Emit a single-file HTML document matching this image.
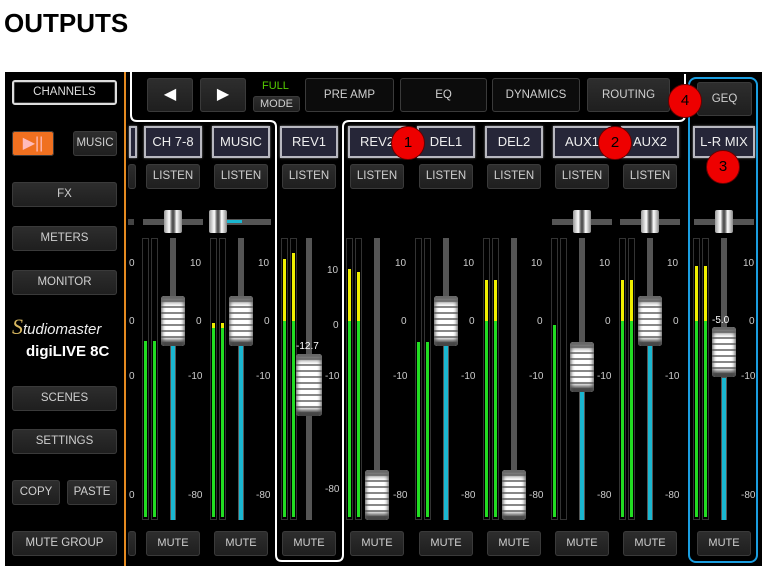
<!DOCTYPE html>
<html><head><meta charset="utf-8"><style>
*{margin:0;padding:0;box-sizing:border-box}
body{width:776px;height:578px;background:#fff;position:relative;overflow:hidden;font-family:"Liberation Sans",Arial,sans-serif}
.a{position:absolute}
h1{position:absolute;left:4px;top:8px;font-size:26px;font-weight:bold;color:#000;letter-spacing:0}
#p{position:absolute;left:5px;top:72px;width:757px;height:494px;background:#000}
.b{position:absolute;background:linear-gradient(#2e2e2e,#1e1e1e);border-radius:3px;color:#cfcfcf;font-size:11.5px;text-align:center;box-shadow:1px 2px 2px #000,inset 0 0 0 1px #3a3a3a}
.lb{position:absolute;top:126px;background:#262638;border:2px solid #b8b8c0;color:#eee;font-size:13px;text-align:center;line-height:28px;height:32px;width:58px;box-shadow:0 0 2px #888}
.m{position:absolute;top:238px;width:7px;height:282px;border:1px solid #333;background:#000}
.m i{position:absolute;left:1px;right:1px;bottom:2px;display:block}
.tr{position:absolute;top:238px;width:6px;height:282px;background:#555}
.cy{position:absolute;width:4px;background:#1ab6d0}
.k{position:absolute;width:24px;height:50px;border-radius:3px;background:repeating-linear-gradient(#fff 0 4px,#888 4px 6px);box-shadow:inset 0 6px 4px #666,inset 0 -6px 4px #444}
.s{position:absolute;color:#ccc;font-size:10px}
.pt{position:absolute;top:219px;width:60px;height:6px;background:#555}
.pk{position:absolute;top:210px;width:18px;height:23px;border-radius:2px;background:linear-gradient(90deg,#999,#fff 30%,#555 45%,#555 55%,#fff 70%,#888)}
.c{position:absolute;width:34px;height:34px;border-radius:50%;background:#e00;border:1px solid #600;color:#000;font-size:15px;text-align:center;line-height:32px}
.L{top:164px;width:54px;height:25px;line-height:25px}.M{top:531px;width:54px;height:25px;line-height:25px;font-size:11px}
</style></head><body>
<h1>OUTPUTS</h1>
<div id="p"></div>
<div class="a" style="left:124px;top:72px;width:2px;height:494px;background:#e58a20"></div>
<svg class="a" style="left:0;top:0" width="776" height="578"><path d="M131,72 V115 Q131,121 137,121 H270 Q276,121 276,127 V555 Q276,561 282,561 H337 Q343,561 343,555 V127 Q343,121 349,121 H679 Q685,121 685,115 V74" fill="none" stroke="#fff" stroke-width="2"/>
<rect x="689" y="78" width="68" height="484" rx="7" fill="none" stroke="#1a9ee0" stroke-width="2"/></svg>
<div class="b" style="left:12px;top:80px;width:105px;height:25px;background:#000;border:2px solid #ddd;line-height:21px;color:#ddd">CHANNELS</div>
<div class="b" style="left:12px;top:131px;width:42px;height:25px;background:#f07020;color:#fbb;line-height:25px;font-size:16px">▶||</div>
<div class="b" style="left:73px;top:131px;width:44px;height:25px;line-height:25px">MUSIC</div>
<div class="b" style="left:12px;top:182px;width:105px;height:25px;line-height:25px">FX</div>
<div class="b" style="left:12px;top:226px;width:105px;height:25px;line-height:25px">METERS</div>
<div class="b" style="left:12px;top:270px;width:105px;height:25px;line-height:25px">MONITOR</div>
<div class="a" style="left:12px;top:314px;color:#eee;font-size:15px;font-style:italic"><span style="color:#d8b860;font-size:22px;font-family:'Liberation Serif',serif">S</span>tudiomaster</div>
<div class="a" style="left:26px;top:343px;color:#fff;font-size:15px;font-weight:bold">digiLIVE 8C</div>
<div class="b" style="left:12px;top:386px;width:105px;height:25px;line-height:25px">SCENES</div>
<div class="b" style="left:12px;top:429px;width:105px;height:25px;line-height:25px">SETTINGS</div>
<div class="b" style="left:12px;top:480px;width:48px;height:25px;line-height:25px">COPY</div>
<div class="b" style="left:67px;top:480px;width:50px;height:25px;line-height:25px">PASTE</div>
<div class="b" style="left:12px;top:531px;width:105px;height:25px;line-height:25px">MUTE GROUP</div>
<div class="b" style="left:147px;top:78px;width:46px;height:34px;line-height:34px;font-size:16px;color:#fff">◀</div>
<div class="b" style="left:200px;top:78px;width:46px;height:34px;line-height:34px;font-size:16px;color:#fff">▶</div>
<div class="a" style="left:262px;top:80px;color:#5c0;font-size:11px">FULL</div>
<div class="b" style="left:253px;top:96px;width:47px;height:16px;line-height:16px;font-size:11px">MODE</div>
<div class="b" style="left:305px;top:78px;width:89px;height:34px;line-height:34px;background:#0c0c0c">PRE AMP</div>
<div class="b" style="left:400px;top:78px;width:87px;height:34px;line-height:34px;background:#0c0c0c">EQ</div>
<div class="b" style="left:492px;top:78px;width:88px;height:34px;line-height:34px;background:#0c0c0c">DYNAMICS</div>
<div class="b" style="left:587px;top:78px;width:83px;height:34px;line-height:34px">ROUTING</div>
<div class="b" style="left:697px;top:82px;width:55px;height:34px;line-height:34px">GEQ</div>
<div class="lb" style="left:129px;width:8px"></div>
<div class="lb" style="left:144px">CH 7-8</div>
<div class="lb" style="left:212px">MUSIC</div>
<div class="lb" style="left:280px">REV1</div>
<div class="lb" style="left:348px">REV2</div>
<div class="lb" style="left:417px">DEL1</div>
<div class="lb" style="left:485px">DEL2</div>
<div class="lb" style="left:553px">AUX1</div>
<div class="lb" style="left:621px">AUX2</div>
<div class="lb" style="left:693px;width:62px">L-R MIX</div>
<div class="b L" style="left:128px;width:8px"></div>
<div class="b L" style="left:146px">LISTEN</div><div class="b L" style="left:214px">LISTEN</div><div class="b L" style="left:282px">LISTEN</div><div class="b L" style="left:350px">LISTEN</div><div class="b L" style="left:419px">LISTEN</div><div class="b L" style="left:487px">LISTEN</div><div class="b L" style="left:555px">LISTEN</div><div class="b L" style="left:623px">LISTEN</div>
<div class="b M" style="left:128px;width:8px"></div>
<div class="b M" style="left:146px">MUTE</div><div class="b M" style="left:214px">MUTE</div><div class="b M" style="left:282px">MUTE</div><div class="b M" style="left:350px">MUTE</div><div class="b M" style="left:419px">MUTE</div><div class="b M" style="left:487px">MUTE</div><div class="b M" style="left:555px">MUTE</div><div class="b M" style="left:623px">MUTE</div><div class="b M" style="left:697px">MUTE</div>
<div class="pt" style="left:128px;width:6px;background:#444"></div>
<div class="pt" style="left:143px"></div><div class="pk" style="left:164px"></div>
<div class="pt" style="left:211px"></div><div class="cy" style="left:227px;top:220px;height:3px;width:15px"></div><div class="pk" style="left:209px"></div>
<div class="pt" style="left:552px"></div><div class="pk" style="left:573px"></div>
<div class="pt" style="left:620px"></div><div class="pk" style="left:641px"></div>
<div class="pt" style="left:694px"></div><div class="pk" style="left:715px"></div>
<div class="m" style="left:142px"><i style="top:102px;background:#2d2"></i></div><div class="m" style="left:151px"><i style="top:102px;background:#2d2"></i></div>
<div class="m" style="left:210px"><i style="top:84px;background:linear-gradient(#ee0 0 5px,#2d2 5px)"></i></div><div class="m" style="left:219px"><i style="top:84px;background:linear-gradient(#ee0 0 5px,#2d2 5px)"></i></div>
<div class="m" style="left:281px"><i style="top:20px;background:linear-gradient(#ee0 0 62px,#2d2 62px)"></i></div><div class="m" style="left:290px"><i style="top:14px;background:linear-gradient(#ee0 0 68px,#2d2 68px)"></i></div>
<div class="m" style="left:346px"><i style="top:30px;background:linear-gradient(#ee0 0 52px,#2d2 52px)"></i></div><div class="m" style="left:355px"><i style="top:33px;background:linear-gradient(#ee0 0 49px,#2d2 49px)"></i></div>
<div class="m" style="left:415px"><i style="top:103px;background:#2d2"></i></div><div class="m" style="left:424px"><i style="top:103px;background:#2d2"></i></div>
<div class="m" style="left:483px"><i style="top:41px;background:linear-gradient(#ee0 0 41px,#2d2 41px)"></i></div><div class="m" style="left:492px"><i style="top:41px;background:linear-gradient(#ee0 0 41px,#2d2 41px)"></i></div>
<div class="m" style="left:551px"><i style="top:86px;background:#2d2"></i></div><div class="m" style="left:560px;"></div>
<div class="m" style="left:619px"><i style="top:41px;background:linear-gradient(#ee0 0 41px,#2d2 41px)"></i></div><div class="m" style="left:628px"><i style="top:41px;background:linear-gradient(#ee0 0 41px,#2d2 41px)"></i></div>
<div class="m" style="left:693px"><i style="top:27px;background:linear-gradient(#ee0 0 55px,#2d2 55px)"></i></div><div class="m" style="left:702px"><i style="top:27px;background:linear-gradient(#ee0 0 55px,#2d2 55px)"></i></div>
<div class="tr" style="left:170px"></div><div class="cy" style="left:171px;top:346px;height:174px"></div><div class="k" style="left:161px;top:296px"></div>
<div class="tr" style="left:238px"></div><div class="cy" style="left:239px;top:346px;height:174px"></div><div class="k" style="left:229px;top:296px"></div>
<div class="tr" style="left:306px"></div><div class="k" style="left:296px;top:354px;width:26px;height:62px"></div><div class="s" style="left:296px;top:341px;color:#fff">-12.7</div>
<div class="tr" style="left:374px"></div><div class="k" style="left:365px;top:470px"></div>
<div class="tr" style="left:443px"></div><div class="cy" style="left:444px;top:346px;height:174px"></div><div class="k" style="left:434px;top:296px"></div>
<div class="tr" style="left:511px"></div><div class="k" style="left:502px;top:470px"></div>
<div class="tr" style="left:579px"></div><div class="cy" style="left:580px;top:392px;height:128px"></div><div class="k" style="left:570px;top:342px"></div>
<div class="tr" style="left:647px"></div><div class="cy" style="left:648px;top:346px;height:174px"></div><div class="k" style="left:638px;top:296px"></div>
<div class="tr" style="left:721px"></div><div class="cy" style="left:722px;top:378px;height:142px"></div><div class="k" style="left:712px;top:327px"></div><div class="s" style="left:712px;top:315px;color:#fff">-5.0</div>
<div class="s" style="left:129px;top:258px">0</div><div class="s" style="left:129px;top:316px">0</div><div class="s" style="left:129px;top:371px">0</div><div class="s" style="left:129px;top:490px">0</div>
<div class="s" style="left:190px;top:258px">10</div><div class="s" style="left:196px;top:316px">0</div><div class="s" style="left:188px;top:371px">-10</div><div class="s" style="left:188px;top:490px">-80</div>
<div class="s" style="left:258px;top:258px">10</div><div class="s" style="left:264px;top:316px">0</div><div class="s" style="left:256px;top:371px">-10</div><div class="s" style="left:256px;top:490px">-80</div>
<div class="s" style="left:327px;top:265px">10</div><div class="s" style="left:333px;top:320px">0</div><div class="s" style="left:325px;top:371px">-10</div><div class="s" style="left:325px;top:484px">-80</div>
<div class="s" style="left:395px;top:258px">10</div><div class="s" style="left:401px;top:316px">0</div><div class="s" style="left:393px;top:371px">-10</div><div class="s" style="left:393px;top:490px">-80</div>
<div class="s" style="left:463px;top:258px">10</div><div class="s" style="left:469px;top:316px">0</div><div class="s" style="left:461px;top:371px">-10</div><div class="s" style="left:461px;top:490px">-80</div>
<div class="s" style="left:531px;top:258px">10</div><div class="s" style="left:537px;top:316px">0</div><div class="s" style="left:529px;top:371px">-10</div><div class="s" style="left:529px;top:490px">-80</div>
<div class="s" style="left:599px;top:258px">10</div><div class="s" style="left:605px;top:316px">0</div><div class="s" style="left:597px;top:371px">-10</div><div class="s" style="left:597px;top:490px">-80</div>
<div class="s" style="left:667px;top:258px">10</div><div class="s" style="left:673px;top:316px">0</div><div class="s" style="left:665px;top:371px">-10</div><div class="s" style="left:665px;top:490px">-80</div>
<div class="s" style="left:743px;top:258px">10</div><div class="s" style="left:749px;top:316px">0</div><div class="s" style="left:741px;top:371px">-10</div><div class="s" style="left:741px;top:490px">-80</div>
<div class="c" style="left:391px;top:126px">1</div>
<div class="c" style="left:598px;top:126px">2</div>
<div class="c" style="left:706px;top:150px">3</div>
<div class="c" style="left:668px;top:84px">4</div>
</body></html>
